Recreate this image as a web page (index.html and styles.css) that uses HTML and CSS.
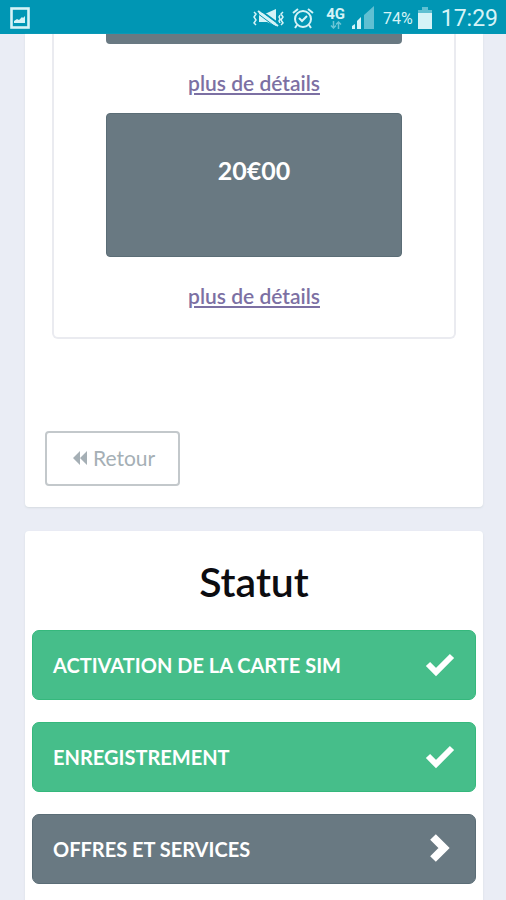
FILE: index.html
```html
<!DOCTYPE html>
<html lang="fr">
<head>
    <meta charset="UTF-8">
    <meta name="viewport" content="width=device-width, initial-scale=1.0">
    <title>Activation</title>
    <link rel="stylesheet" href="styles.css">
</head>
<body>
    <header class="statusbar">
        <svg class="picture" width="20" height="22" viewBox="0 0 20 22">
            <rect x="1.500" y="1.500" width="17" height="19" fill="none" stroke="currentColor" stroke-width="2.600"/>
            <path d="M4 16v-2l3-2 2 1 3-3 1 1 2-2v7z" fill="currentColor"/>
        </svg>
        <div class="indicators">
            <svg width="33" height="22" viewBox="0 0 33 22" fill="none" stroke="currentColor" stroke-width="1.500">
                <path d="M2 5l2 2-2 3 2 3-2 3 2 2M31 5l-2 2 2 3-2 3 2 3-2 2M28 8l-1 2 1 2-1 2 1 2"/>
                <path d="M7 6h8l9-4v17l-9-4H7z" fill="currentColor" stroke="none"/>
                <path d="M8 3l19 14" stroke="#0096b4" stroke-width="2"/>
                <path d="M6 4l20 15" stroke-width="2"/>
                <path d="M5 6l20 15" stroke="#0096b4" stroke-width="1"/>
            </svg>
            <svg class="alarm" width="22" height="22" viewBox="0 0 22 22" fill="none" stroke="currentColor" stroke-width="2">
                <circle cx="11" cy="12" r="8"/>
                <path d="M7 11l3 3 5-5M1 6l5-4M21 6l-5-4M5 18l-2 3M17 18l2 3"/>
            </svg>
            <div class="network">
                <span>4G</span>
                <svg width="12" height="8" viewBox="0 0 12 8" fill="none" stroke="currentColor" stroke-width="1.500">
                    <path d="M3.500 0v7M1 4.500L3.500 7 6 4.500M8.500 8V1M6 3.500L8.500 1 11 3.500"/>
                </svg>
            </div>
            <svg class="signal" width="24" height="24" viewBox="0 0 24 24" fill="currentColor">
                <path d="M13 9L23 0v23H13z" opacity=".45"/>
                <path d="M1 20l3-2v5H1zM6 15l4-4v12H6z"/>
            </svg>
            <span class="percent">74%</span>
            <svg class="battery" width="14" height="22" viewBox="0 0 14 22" fill="currentColor">
                <path d="M4 0h6v3h4v4H0V3h4z" opacity=".45"/>
                <path d="M0 6h14v16H0z"/>
            </svg>
            <span class="time">17:29</span>
        </div>
    </header>

    <main>
        <section class="card recharge">
            <div class="offers">
                <div class="offer-end"></div>
                <a class="details" href="#">plus de détails</a>
                <button class="offer" type="button">20€00</button>
                <a class="details" href="#">plus de détails</a>
            </div>
            <button class="back" type="button">
                <svg width="14" height="14" viewBox="0 0 14 14" fill="currentColor">
                    <path d="M7 0v14L0 7zM14 0v14L7 7z"/>
                </svg>
                Retour
            </button>
        </section>

        <section class="card status">
            <h1>Statut</h1>
            <button class="step done" type="button">
                ACTIVATION DE LA CARTE SIM
                <svg width="30" height="30" viewBox="0 0 30 30">
                    <path d="M3 14l8 8L27 6" fill="none" stroke="currentColor" stroke-width="6"/>
                </svg>
            </button>
            <button class="step done" type="button">
                ENREGISTREMENT
                <svg width="30" height="30" viewBox="0 0 30 30">
                    <path d="M3 14l8 8L27 6" fill="none" stroke="currentColor" stroke-width="6"/>
                </svg>
            </button>
            <button class="step" type="button">
                OFFRES ET SERVICES
                <svg width="30" height="30" viewBox="0 0 30 30">
                    <path d="M8 3l11 11L8 25" fill="none" stroke="currentColor" stroke-width="8"/>
                </svg>
            </button>
        </section>
    </main>
</body>
</html>
```

FILE: styles.css
```css
* {
    box-sizing: border-box;
}

body {
    display: flex;
    flex-direction: column;
    min-height: 100vh;
    margin: 0;
    background-color: #eaedf5;
    font-family: Lato, sans-serif;
}

button {
    font-family: inherit;
    cursor: pointer;
}

.statusbar {
    display: flex;
    justify-content: space-between;
    align-items: center;
    height: 34px;
    padding: 2px 8px 0 10px;
    background-color: #0096b4;
    color: #d5f3f7;
    font-family: Roboto, sans-serif;
}

.indicators {
    display: flex;
    align-items: center;
}

.alarm {
    margin-left: 7px;
}

.network {
    display: flex;
    flex-direction: column;
    align-items: center;
    margin-left: 12px;
    font-size: 15px;
    font-weight: bold;
    line-height: 14px;
}

.network svg {
    opacity: 0.5;
}

.signal {
    margin-left: 6px;
}

.percent {
    margin-left: 8px;
    font-size: 16px;
}

.battery {
    margin-left: 5px;
}

.time {
    margin-left: 9px;
    font-size: 23px;
}

main {
    display: flex;
    flex: 1;
    flex-direction: column;
    gap: 24px;
    padding: 0 23px 0 25px;
}

.card {
    border-radius: 4px;
    background-color: #fff;
    box-shadow: 0 1px 2px #d5dbe0;
}

.recharge {
    padding: 0 20px 21px;
    border-radius: 0 0 4px 4px;
}

.offers {
    display: flex;
    flex-direction: column;
    margin: 0 7px 92px;
    padding: 0 52px 29px;
    border: 2px solid #eaebf0;
    border-top: 0;
    border-radius: 0 0 6px 6px;
}

.offer-end {
    height: 10px;
    border-radius: 0 0 4px 4px;
    background-color: #697982;
}

.details {
    margin: 26px auto 18px;
    color: #7c70a3;
    font-size: 21px;
    font-weight: 600;
    line-height: 25px;
}

.details:last-child {
    margin-bottom: 0;
}

.offer {
    height: 144px;
    padding: 0 0 30px;
    border: 1px solid #5b6d76;
    border-radius: 4px;
    background-color: #697982;
    color: #fff;
    font-size: 25px;
    font-weight: bold;
}

.back {
    display: flex;
    align-items: center;
    gap: 6px;
    height: 55px;
    padding: 0 23px 2px 26px;
    border: 2px solid #c3c8cb;
    border-radius: 4px;
    background-color: #fff;
    color: #a5afb5;
    font-size: 21px;
}

.status {
    display: flex;
    flex: 1;
    flex-direction: column;
    gap: 22px;
    padding: 26px 7px 17px;
    border-radius: 4px 4px 0 0;
}

h1 {
    margin: 0 0 2px;
    color: #0c0c10;
    font-size: 41px;
    font-weight: 600;
    line-height: 49px;
    text-align: center;
}

.step {
    display: flex;
    justify-content: space-between;
    align-items: center;
    height: 70px;
    padding: 0 20px;
    border: 1px solid #5b6d76;
    border-radius: 7px;
    background-color: #697982;
    color: #fff;
    font-size: 20px;
    font-weight: bold;
}

.done {
    border-color: #35b87c;
    background-color: #46be8a;
}
```
